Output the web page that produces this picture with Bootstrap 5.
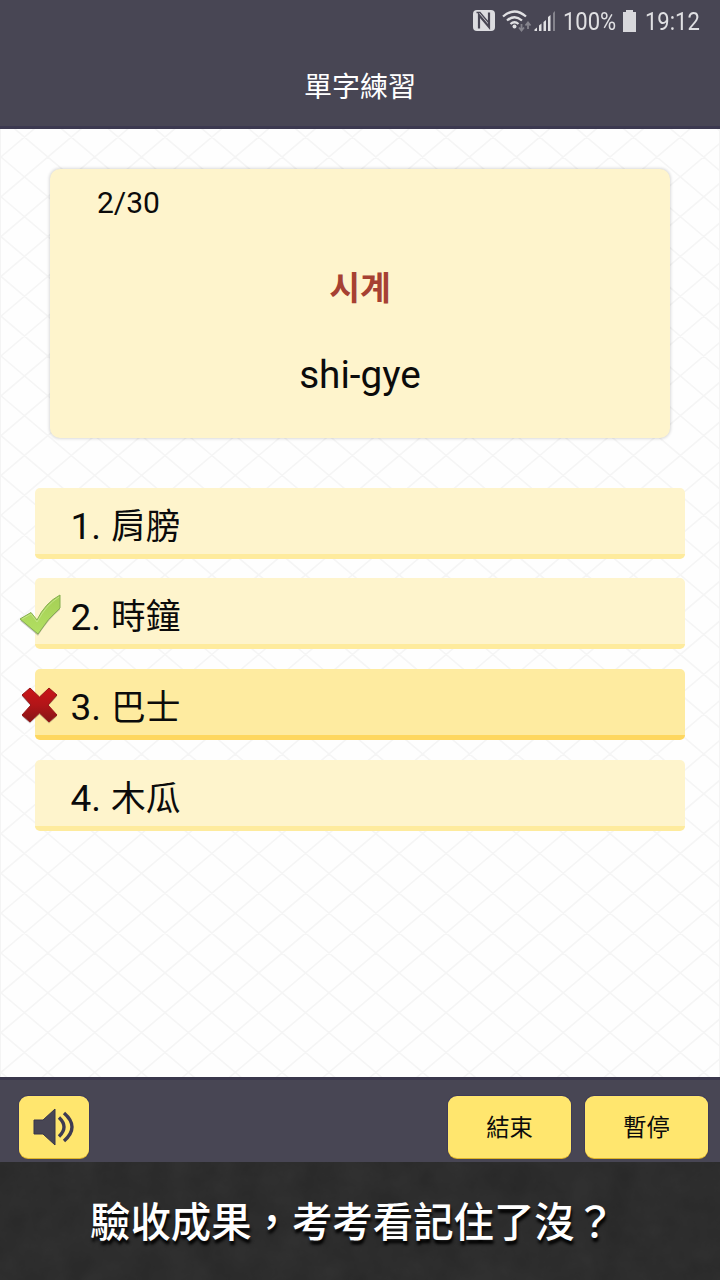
<!DOCTYPE html>
<html lang="zh-Hant">
<head>
<meta charset="utf-8">
<meta name="viewport" content="width=device-width, initial-scale=1">
<title>單字練習</title>
<link href="https://cdn.jsdelivr.net/npm/bootstrap@5.3.0/dist/css/bootstrap.min.css" rel="stylesheet">
<style>
  body { font-family: Roboto, "Noto Sans CJK TC", sans-serif; color: #0b0b0b; line-height: 1; background: #fefefe; }
  .app { height: 1280px; width: 720px; }
  .app-head { height: 129px; background: #484654; border-bottom: 3px solid #3c3950; color: #fff; }
  .status { height: 42px; padding-right: 19px; color: #e0e0e3; }
  .status-text { font-size: 26.5px; padding-top: 1px; white-space: nowrap; transform: scaleX(.83); transform-origin: left; }
  .level { width: 55px; margin-left: 7px; }
  .clock { width: 56px; }
  .app-title { font-size: 28px; height: 92px; }
  .stage { height: 948px; padding: 40px 34px 0; border: solid #f4f4f4; border-width: 0 1px; }
  .quiz-card { height: 269px; margin: 0 15px; background: #fef4cc; border-radius: 10px; box-shadow: 0 0 3px 1px rgba(0,0,0,.14); }
  .count { font-size: 30px; padding: 19px 0 0 47px; }
  .word { font-family: "Noto Sans CJK KR", sans-serif; font-weight: 700; font-size: 33.5px; color: #a64132; margin-top: 51px; }
  .roman { font-size: 38.7px; margin-top: 53px; }
  .option { height: 71px; background: #fef4cc; border-bottom: 5px solid #feeb9d; border-radius: 5px; padding: 12px 0 0 35.5px; font-size: 37px; }
  .option .han { font-size: 34.7px; margin-left: 10px; padding-top: 1px; }
  .option.picked { background: #feeba0; border-bottom-color: #fed75f; }
  .mark-icon { left: -17px; top: 12px; }
  .app-foot { height: 85px; background: #484654; border-top: 3px solid #3a374c; padding: 16px 12px 0 19px; }
  .key { height: 62px; width: 123px; border-radius: 9px; background: #ffe66e; border: 0; box-shadow: 0 1px 0 #dfb52a, 0 0 0 1px #3e3b58; color: #0b0b0b; font-size: 23.300px; line-height: 1; padding: 4px 0 0; }
  .key-sound { width: 70px; padding: 0; }
  .key-end { margin-right: 14px; }
  .key:hover { background: #ffe66e; }
  .caption-bar { height: 118px; background: #303030; color: #fff; font-family: "Noto Sans CJK TC", sans-serif; font-weight: 500; font-size: 40.4px; text-shadow: 1px 4px 3px #000; }
</style>
</head>
<body>
<main class="app d-flex flex-column overflow-hidden">
  <header class="app-head flex-shrink-0">
    <div class="status d-flex align-items-center justify-content-end">
      <svg width="84" height="24" viewBox="0 0 84 24">
        <rect x="1" y="1" width="22" height="21" rx="4" fill="#dcdce0"/>
        <path d="M7 19.500V6L17 18V3.500" fill="none" stroke="#484654" stroke-width="2.2"/>
        <path d="M4.500 3.500H8L17 14" fill="none" stroke="#484654" stroke-width="1.300"/>
        <g fill="none" stroke="#e0e0e3" stroke-width="2.3"><path d="M31 7.500q11.500-10 23 0M35 11.500q7.500-6.500 15 0M38.500 15q4-3.500 8 0"/></g>
        <circle cx="42.500" cy="17.500" r="2" fill="#e0e0e3"/>
        <path d="M49.500 15v6m-2.500-2.500 2.500 3 2.500-3M56 20v-6m-2.500 2.500 2.500-3 2.500 3" fill="none" stroke="#85848d" stroke-width="1.8"/>
        <path d="M62.500 22v-1.500l2.500-2V22zM67 22v-5.500l2.500-2V22zM71.500 22v-9l2.500-2v11zM76 22V8l2.500-2v16z" fill="#e0e0e3"/>
        <path d="M81 22V4l2-2v20z" fill="#85848d"/>
      </svg>
      <div class="level status-text">100%</div>
      <svg width="15" height="22" viewBox="0 0 15 22" style="margin:0 8px 0 4px"><path d="M1 2h3V0h7v2h3v20H1z" fill="#d8d8dc"/></svg>
      <div class="clock status-text">19:12</div>
    </div>
    <div class="app-title d-flex align-items-center justify-content-center">單字練習</div>
  </header>

  <section class="stage position-relative flex-shrink-0">
    <svg class="position-absolute top-0 start-0 w-100 h-100"><path id="lattice" fill="none" stroke="#f5f5f5" stroke-width="1.6"/></svg>
    <div class="quiz-card position-relative d-flex flex-column">
      <div class="count">2/30</div>
      <div class="word text-center">시계</div>
      <div class="roman text-center">shi-gye</div>
    </div>
    <div class="position-relative d-grid" style="gap:19.7px;margin-top:49.5px">
      <div class="option d-flex align-items-center">1.<span class="han">肩膀</span></div>
      <div class="option position-relative d-flex align-items-center">
        <svg class="mark-icon position-absolute" width="48" height="50" viewBox="0 0 48 50">
          <defs><linearGradient id="ok" x2="0" y2="1"><stop stop-color="#a5cf55"/><stop offset="1" stop-color="#b2e062"/></linearGradient></defs>
          <path d="M2 29 13 22.500 19 30Q27 13 42 5V18Q30 28 20 44Z" fill="#333" opacity=".28" transform="translate(0 1.800)"/>
          <path d="M2 29 13 22.500 19 30Q27 13 42 5V18Q30 28 20 44Z" fill="url(#ok)" stroke="#86ae50" stroke-linejoin="round"/>
          <path d="M4 29 13 24 19 32Q28 15 41 7" fill="none" stroke="#c3e584" stroke-width="1"/>
        </svg>2.<span class="han">時鐘</span></div>
      <div class="option picked position-relative d-flex align-items-center">
        <svg class="mark-icon position-absolute" width="48" height="50" viewBox="0 0 48 50">
          <defs><linearGradient id="no" x2="0" y2="1"><stop stop-color="#c91517"/><stop offset=".5" stop-color="#b21518"/><stop offset="1" stop-color="#851416"/></linearGradient></defs>
          <path d="M12 7 21.500 16 31 7 39 14 30 24 39 34 31 41 21.500 32 12 41 4 34 13 24 4 14Z" fill="#333" opacity=".28" transform="translate(0 1.500)"/>
          <path d="M12 7 21.500 16 31 7 39 14 30 24 39 34 31 41 21.500 32 12 41 4 34 13 24 4 14Z" fill="url(#no)" stroke="#981719" stroke-linejoin="round"/>
        </svg>3.<span class="han">巴士</span></div>
      <div class="option d-flex align-items-center">4.<span class="han">木瓜</span></div>
    </div>
  </section>

  <footer class="app-foot flex-shrink-0 d-flex align-items-start">
    <button class="btn key key-sound me-auto d-flex align-items-center justify-content-center" aria-label="發音">
      <svg width="42" height="38" viewBox="0 0 42 38"><path d="M1 12h9L22 1v36L10 26H1z" fill="#484654" stroke="#36344a"/><g fill="none" stroke="#3e3b52" stroke-width="3.400"><path d="M26 9.500q10 9.500 0 19M31 5q16 14 0 28"/></g></svg>
    </button>
    <button class="btn key key-end">結束</button>
    <button class="btn key">暫停</button>
  </footer>
  <div class="caption-bar position-relative flex-shrink-0 d-flex align-items-center">
    <svg class="position-absolute top-0 start-0 w-100 h-100">
      <filter id="grain" x="0" y="0" width="100%" height="100%"><feTurbulence type="fractalNoise" baseFrequency=".03" numOctaves="7" seed="4"/><feColorMatrix values="0 0 0 0 0  0 0 0 0 0  0 0 0 0 0  .6 .4 0 0 -.3"/></filter>
      <rect width="100%" height="100%" filter="url(#grain)" opacity=".3"/>
    </svg>
    <span class="position-relative text-nowrap" style="margin-left:90px;margin-top:-2px">驗收成果，考考看記住了沒？</span>
  </div>
</main>
<script src="https://cdn.jsdelivr.net/npm/bootstrap@5.3.0/dist/js/bootstrap.bundle.min.js"></script>
<script>
  // Two families of diagonals make the diamond lattice behind the quiz
  const step = 39.8, drop = 720 * 0.8495;
  let d = '';
  for (let k = -16; k < 40; k++) {
    const y = 28 + k * step;
    d += `M0 ${y}L720 ${y + drop}M0 ${y}L720 ${y - drop}`;
  }
  document.getElementById('lattice').setAttribute('d', d);
</script>
</body>
</html>
